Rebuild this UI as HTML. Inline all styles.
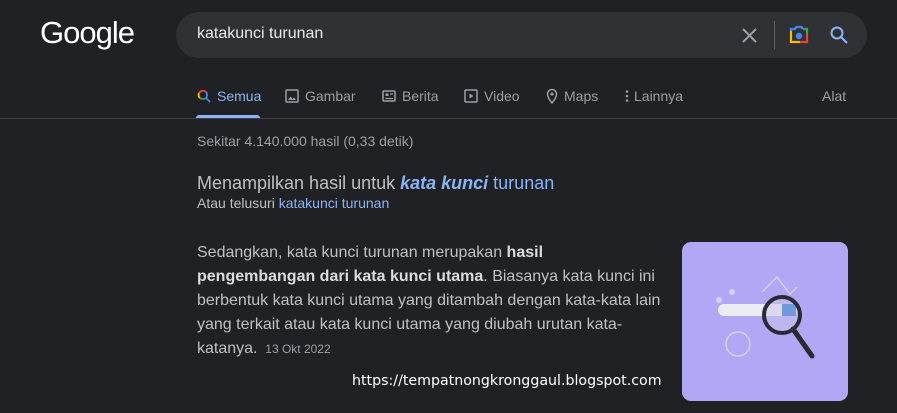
<!DOCTYPE html>
<html><head><meta charset="utf-8"><style>
*{margin:0;padding:0;box-sizing:border-box}
body{width:897px;height:413px;background:#202124;font-family:"Liberation Sans",Arial,sans-serif;position:relative;overflow:hidden;color:#bdc1c6}
.abs{position:absolute}
.logo{left:40px;top:15px;font-size:31px;color:#fff;letter-spacing:-1px;font-family:"Liberation Sans",sans-serif}
.box{left:176px;top:12px;width:691px;height:46px;background:#303134;border-radius:23px}
.q{left:197px;top:25px;font-size:16px;color:#e8eaed}
.tab{top:88px;font-size:14px;color:#9aa0a6;display:flex;align-items:center;gap:6px}
.line{left:0;top:118px;width:897px;height:1px;background:#3c4043}
.ul{left:196px;top:115px;width:64px;height:3px;background:#8ab4f8;border-radius:3px 3px 0 0}
.body{left:197px;top:241px;font-size:16px;line-height:24px;color:#bdc1c6;white-space:nowrap}
b{color:#dadce0}
</style></head><body>
<div class="abs logo">Google</div>
<div class="abs box"></div>
<div class="abs q">katakunci turunan</div>
<svg class="abs" style="left:741px;top:27px" width="17" height="17" viewBox="0 0 17 17"><path d="M2 2L15 15M15 2L2 15" stroke="#9aa0a6" stroke-width="2"/></svg>
<div class="abs" style="left:774px;top:21px;width:1px;height:28px;background:#5f6368"></div>
<svg class="abs" style="left:788px;top:25px" width="22" height="20" viewBox="0 0 22 20"><path d="M3 6V17H12" stroke="#fbbc04" stroke-width="2.2" fill="none"/><path d="M12 17H19V9" stroke="#ea4335" stroke-width="2.2" fill="none"/><path d="M19 9V4H15" stroke="#34a853" stroke-width="2.2" fill="none"/><path d="M15 4L13.5 2H8.5L7 4H3V6" stroke="#4285f4" stroke-width="2.2" fill="none"/><circle cx="11" cy="11" r="3.2" fill="#4285f4"/></svg>
<svg class="abs" style="left:829px;top:25px" width="20" height="20" viewBox="0 0 20 20"><circle cx="8" cy="8" r="5.5" stroke="#8ab4f8" stroke-width="2" fill="none"/><path d="M12 12L18 18" stroke="#8ab4f8" stroke-width="2.2"/></svg>

<div class="abs tab" style="left:197px;color:#8ab4f8"><svg width="14" height="14" viewBox="0 0 14 14"><path d="M9 3A4.5 4.5 0 0 0 2 4" stroke="#ea4335" stroke-width="1.8" fill="none"/><path d="M2 4A4.5 4.5 0 0 0 3 9" stroke="#fbbc04" stroke-width="1.8" fill="none"/><path d="M3 9A4.5 4.5 0 0 0 9 9" stroke="#34a853" stroke-width="1.8" fill="none"/><path d="M9 9A4.5 4.5 0 0 0 9 3" stroke="#4285f4" stroke-width="1.8" fill="none"/><path d="M9 9L13 13" stroke="#4285f4" stroke-width="1.8"/></svg>Semua</div>
<div class="abs tab" style="left:285px"><svg width="14" height="14" viewBox="0 0 14 14"><rect x="1" y="1" width="12" height="12" rx="1" stroke="#9aa0a6" stroke-width="1.5" fill="none"/><path d="M3 11L5.5 7.5L7.5 10L9 8.5L11 11Z" fill="#9aa0a6"/></svg>Gambar</div>
<div class="abs tab" style="left:382px"><svg width="14" height="14" viewBox="0 0 14 14"><rect x="1" y="2" width="12" height="10" rx="1" stroke="#9aa0a6" stroke-width="1.5" fill="none"/><rect x="3.5" y="4.5" width="3" height="2.5" fill="#9aa0a6"/><path d="M8 5H11M3.5 9.5H11" stroke="#9aa0a6" stroke-width="1.3"/></svg>Berita</div>
<div class="abs tab" style="left:464px"><svg width="14" height="14" viewBox="0 0 14 14"><rect x="1" y="1" width="12" height="12" rx="1" stroke="#9aa0a6" stroke-width="1.5" fill="none"/><path d="M5.5 4.5V9.5L9.5 7Z" fill="#9aa0a6"/></svg>Video</div>
<div class="abs tab" style="left:546px"><svg width="12" height="16" viewBox="0 0 12 16"><path d="M6 15C6 15 1.5 9.5 1.5 6A4.5 4.5 0 0 1 10.5 6C10.5 9.5 6 15 6 15Z" stroke="#9aa0a6" stroke-width="1.5" fill="none"/><circle cx="6" cy="6" r="1.6" fill="#9aa0a6"/></svg>Maps</div>
<div class="abs tab" style="left:625px;gap:5px"><svg width="4" height="14" viewBox="0 0 4 14"><circle cx="2" cy="2.5" r="1.3" fill="#9aa0a6"/><circle cx="2" cy="7" r="1.3" fill="#9aa0a6"/><circle cx="2" cy="11.5" r="1.3" fill="#9aa0a6"/></svg>Lainnya</div>
<div class="abs tab" style="left:822px">Alat</div>
<div class="abs ul"></div>
<div class="abs line"></div>

<div class="abs" style="left:197px;top:133px;font-size:14px;color:#9aa0a6">Sekitar 4.140.000 hasil (0,33 detik)</div>
<div class="abs" style="left:197px;top:173px;font-size:18px;color:#bdc1c6">Menampilkan hasil untuk <b style="color:#8ab4f8;font-style:italic">kata kunci</b> <span style="color:#8ab4f8">turunan</span></div>
<div class="abs" style="left:197px;top:195px;font-size:14px;color:#bdc1c6">Atau telusuri <span style="color:#8ab4f8">katakunci turunan</span></div>

<div class="abs body">Sedangkan, kata kunci turunan merupakan <b>hasil</b><br><b>pengembangan dari kata kunci utama</b>. Biasanya kata kunci ini<br>berbentuk kata kunci utama yang ditambah dengan kata-kata lain<br>yang terkait atau kata kunci utama yang diubah urutan kata-<br>katanya. <span style="font-size:12px;color:#9aa0a6">&nbsp;13 Okt 2022</span></div>

<div class="abs" style="left:682px;top:242px;width:166px;height:159px;background:#b0a8f4;border-radius:9px;overflow:hidden">
<svg width="166" height="159" viewBox="0 0 166 159"><path d="M80 50L95 35L108 52L115 45" stroke="#d6d1fa" stroke-width="1.5" fill="none"/><circle cx="50" cy="50" r="3" fill="#d6d1fa"/><circle cx="37" cy="58" r="3" fill="#d6d1fa"/><circle cx="56" cy="102" r="12" stroke="#d6d1fa" stroke-width="1.5" fill="none"/>
<rect x="36" y="62" width="80" height="12" rx="6" fill="#ececf4"/><rect x="100" y="62" width="14" height="12" fill="#1a6fc4"/>
<circle cx="100" cy="73" r="18" fill="#c8c4ee" fill-opacity="0.5" stroke="#2a2a33" stroke-width="4"/><path d="M111 87L130 114" stroke="#2a2a33" stroke-width="5" stroke-linecap="round"/></svg>
</div>
<div class="abs" style="left:352px;top:373px;font-family:'DejaVu Sans',sans-serif;font-size:14.2px;color:#fff">https://tempatnongkronggaul.blogspot.com</div>
</body></html>
